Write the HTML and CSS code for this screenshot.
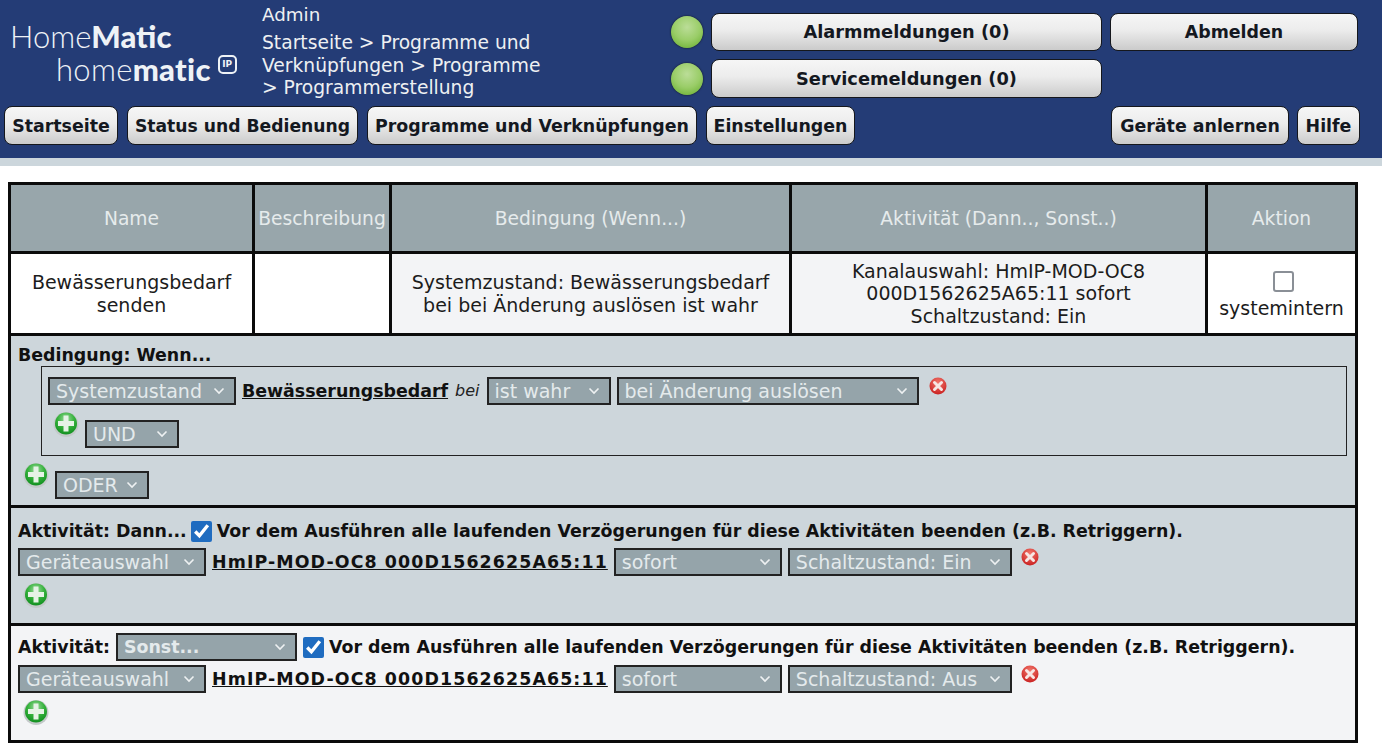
FILE: index.html
```html
<!DOCTYPE html>
<html lang="de">
<head>
<meta charset="utf-8">
<title>HomeMatic</title>
<link rel="stylesheet" href="styles.css">
</head>
<body>
<svg class="defs" width="0" height="0" aria-hidden="true">
  <defs>
    <radialGradient id="gg" cx="50%" cy="30%" r="75%"><stop offset="0" stop-color="#9fdc9f"/><stop offset="0.5" stop-color="#35b23c"/><stop offset="1" stop-color="#0c8a1c"/></radialGradient>
    <radialGradient id="rg" cx="50%" cy="30%" r="75%"><stop offset="0" stop-color="#f2776c"/><stop offset="1" stop-color="#c71c1c"/></radialGradient>
    <symbol id="plus" viewBox="0 0 26 26"><circle cx="13" cy="13.500" r="12.500" fill="#c3c9c9"/><circle cx="13" cy="12.500" r="11" fill="url(#gg)"/><path d="M10.500 4.500h5v5.500H21v5h-5.500v5.500h-5V15H5v-5h5.500z" fill="#e6f3e6"/></symbol>
    <symbol id="cross" viewBox="0 0 18 18"><circle cx="9" cy="9" r="8.500" fill="url(#rg)"/><path d="M5.500 5.500l7 7M12.500 5.500l-7 7" stroke="#f7e6e4" stroke-width="3" stroke-linecap="round"/></symbol>
  </defs>
</svg>
<header class="topbar">
  <div class="toprow">
    <div class="logo">
      <div class="logo-a">Home<b>Matic</b></div>
      <div class="logo-b">home<b>matic</b><span class="ip">IP</span></div>
    </div>
    <div class="crumbs">
      <div class="user">Admin</div>
      <div class="path">Startseite &gt; Programme und Verknüpfungen &gt; Programme &gt; Programmerstellung</div>
    </div>
    <div class="status">
      <span class="led"></span>
      <button class="btn wide">Alarmmeldungen (0)</button>
      <button class="btn">Abmelden</button>
      <span class="led"></span>
      <button class="btn wide">Servicemeldungen (0)</button>
    </div>
  </div>
  <nav class="navrow">
    <button class="btn b114">Startseite</button>
    <button class="btn b231">Status und Bedienung</button>
    <button class="btn b330">Programme und Verknüpfungen</button>
    <button class="btn b149">Einstellungen</button>
    <span class="spacer"></span>
    <button class="btn b178">Geräte anlernen</button>
    <button class="btn b63">Hilfe</button>
  </nav>
</header>
<div class="stripe"></div>
<main class="panel">
  <table class="overview">
    <colgroup><col class="c1"><col class="c2"><col class="c3"><col class="c4"><col class="c5"></colgroup>
    <thead>
      <tr><th>Name</th><th>Beschreibung</th><th>Bedingung (Wenn...)</th><th>Aktivität (Dann.., Sonst..)</th><th>Aktion</th></tr>
    </thead>
    <tbody>
      <tr>
        <td>Bewässerungsbedarf senden</td>
        <td></td>
        <td class="soft">Systemzustand: Bewässerungsbedarf bei bei Änderung auslösen ist wahr</td>
        <td class="soft">Kanalauswahl: HmIP-MOD-OC8 000D1562625A65:11 sofort Schaltzustand: Ein</td>
        <td><input class="sys" type="checkbox"><div>systemintern</div></td>
      </tr>
    </tbody>
  </table>
  <section class="sec sec-if">
    <div class="title">Bedingung: Wenn...</div>
    <div class="group">
      <div class="line">
        <select class="sel w188"><option>Systemzustand</option></select>
        <a class="link">Bewässerungsbedarf</a>
        <i class="bei">bei</i>
        <select class="sel w124"><option>ist wahr</option></select>
        <select class="sel w302"><option>bei Änderung auslösen</option></select>
        <svg class="x"><use href="#cross"/></svg>
      </div>
      <div class="line addline">
        <svg class="add"><use href="#plus"/></svg>
        <select class="sel w94"><option>UND</option></select>
      </div>
    </div>
    <div class="line addline outer">
      <svg class="add"><use href="#plus"/></svg>
      <select class="sel w94"><option>ODER</option></select>
    </div>
  </section>
  <section class="sec sec-then">
    <div class="line head">
      <b>Aktivität: Dann...</b>
      <input class="chk" type="checkbox" checked>
      <b>Vor dem Ausführen alle laufenden Verzögerungen für diese Aktivitäten beenden (z.B. Retriggern).</b>
    </div>
    <div class="line">
      <select class="sel w188"><option>Geräteauswahl</option></select>
      <a class="link dev">HmIP-MOD-OC8 000D1562625A65:11</a>
      <select class="sel w168"><option>sofort</option></select>
      <select class="sel w224"><option>Schaltzustand: Ein</option></select>
      <svg class="x"><use href="#cross"/></svg>
    </div>
    <svg class="add solo"><use href="#plus"/></svg>
  </section>
  <section class="sec sec-else">
    <div class="line head">
      <b>Aktivität:</b>
      <select class="sel w181 strong"><option>Sonst...</option></select>
      <input class="chk" type="checkbox" checked>
      <b>Vor dem Ausführen alle laufenden Verzögerungen für diese Aktivitäten beenden (z.B. Retriggern).</b>
    </div>
    <div class="line">
      <select class="sel w188"><option>Geräteauswahl</option></select>
      <a class="link dev">HmIP-MOD-OC8 000D1562625A65:11</a>
      <select class="sel w168"><option>sofort</option></select>
      <select class="sel w224"><option>Schaltzustand: Aus</option></select>
      <svg class="x"><use href="#cross"/></svg>
    </div>
    <svg class="add solo"><use href="#plus"/></svg>
  </section>
</main>
</body>
</html>
```
FILE: styles.css
```css
* { box-sizing: border-box; }
html, body { margin: 0; padding: 0; }
body { width: 1382px; height: 756px; overflow: hidden; background: #fff; color: #111; font: 19px/22px "DejaVu Sans", Verdana, sans-serif; }
.defs { display: block; height: 0; }

.topbar { height: 158px; background: #243c76; color: #eef0f2; }
.toprow { display: flex; height: 106px; }
.logo { width: 262px; padding: 20px 0 0 10px; font-family: Lato, sans-serif; color: #eef2f6; font-weight: 300; font-size: 31px; line-height: 33px; }
.logo b { font-weight: 900; }
.logo-b { padding-left: 46px; display: flex; align-items: flex-start; letter-spacing: .3px; }
.ip { display: block; margin: 2px 0 0 7px; width: 19px; height: 19px; border: 2px solid #eef2f6; border-radius: 5px; font: 700 9px/15px "DejaVu Sans", sans-serif; text-align: center; letter-spacing: 0; }
.crumbs { width: 380px; padding-top: 3px; font-size: 18.700px; }
.user { line-height: 23px; margin-bottom: 6px; font-size: 18.300px; }
.path { width: 282px; line-height: 22.500px; }
.status { display: grid; grid-template-columns: 32px 391px 248px; column-gap: 8px; row-gap: 8px; grid-template-rows: 38px 39px; padding-top: 13px; margin-left: 29px; align-items: center; }
.status .btn { height: 100%; }
.led { width: 32px; height: 32px; border-radius: 50%; background: radial-gradient(circle at 50% 35%, #bbdd98 0, #9acd68 50%, #62ab28 100%); box-shadow: 0 0 2px #111; }

.navrow { display: flex; gap: 9px; height: 39px; padding: 0 22px 0 4px; }
.spacer { flex: 1; }
.navrow .b63 { margin-left: -1px; }
.btn { padding: 0; height: 39px; border: 1.500px solid #15171c; border-radius: 8px; background: linear-gradient(#f6f6f6 0, #ececec 45%, #cbcbcb 100%); color: #14181f; font: 700 17.400px/22px "DejaVu Sans", sans-serif; white-space: nowrap; }
.wide { font-size: 17.800px; }
.b114 { width: 114px; } .b231 { width: 231px; font-size: 17.200px; } .b330 { width: 330px; } .b149 { width: 149px; } .b178 { width: 178px; } .b63 { width: 63px; }

.stripe { height: 8px; background: #ccd6dc; }

.panel { margin: 16px 0 0 8px; width: 1350px; border: 3px solid #0b0b0b; border-top: 0; }
.overview { width: 1350px; margin-left: -3px; border-collapse: collapse; table-layout: fixed; text-align: center; }
.overview th, .overview td { border: 3px solid #0b0b0b; padding: 0; }
.overview th { height: 69px; padding-top: 1px; background: #98a6ab; color: #e6ebec; font-weight: 400; font-size: 18.700px; white-space: nowrap; overflow: hidden; }
.overview td { height: 82px; background: #fff; line-height: 22.500px; padding: 0 8px; color: #1c1c1c; }
.overview td.soft { background: #f3f4f6; }
.c1 { width: 244px; } .c2 { width: 137px; } .c3 { width: 400px; } .c4 { width: 416px; } .c5 { width: 150px; }
.sys { display: block; width: 21px; height: 21px; margin: 3px 0 5px calc(50% - 9px); appearance: none; border: 2.500px solid #8a8f96; border-radius: 3px; background: #fff; }

.sec { border-top: 3px solid #0b0b0b; padding: 0 7px; }
.overview + .sec { border-top: 0; }
.sec-if { height: 169px; background: #cdd6db; padding-top: 8px; }
.sec-then { height: 118px; background: #cdd6db; padding-top: 8px; }
.sec-else { height: 117px; background: #f3f4f6; padding-top: 6px; }
.title { font-weight: 700; font-size: 17.400px; line-height: 22px; }
.group { margin: 0 0 0 23px; width: 1306px; height: 90px; border: 1.500px solid #222; padding-top: 10px; }
.group .line { margin-left: 6px; }
.line { display: flex; align-items: flex-start; gap: 6px; }
.line b, .line .link { font-size: 17.400px; line-height: 28px; }
.head { align-items: center; margin-bottom: 2px; height: 30px; }
.sec-then .chk { margin-left: -2px; }
.sec-else .head { margin-bottom: 3px; }
.sel { appearance: none; height: 28px; padding: 0 20px 0 6px; border: 2px solid #222; border-radius: 0; background: #95a4aa url("data:image/svg+xml,%3Csvg xmlns='http://www.w3.org/2000/svg' width='12' height='8'%3E%3Cpath d='M1.500 1.500 6 6l4.500-4.500' fill='none' stroke='%23eef1f2' stroke-width='1.600'/%3E%3C/svg%3E") no-repeat right 9px center; color: #e4eaec; font: 19px "DejaVu Sans", sans-serif; }
.strong { font-weight: 700; font-size: 17.400px; }
.w94 { width: 94px; } .w124 { width: 124px; } .w168 { width: 168px; } .w181 { width: 181px; } .w188 { width: 188px; } .w224 { width: 224px; } .w302 { width: 302px; }
.link { color: #111; font-weight: 700; text-decoration: underline; }
.line .dev { letter-spacing: 1.100px; }
.bei { line-height: 28px; font-size: 16px; color: #222; margin: 0 1px; }
.x { width: 18px; height: 18px; margin-left: 3px; }
.group .x { margin: 0 0 0 4px; }
.add { width: 26px; height: 26px; display: block; }
.addline .add { margin-top: -9px; }
.outer { margin-top: 15px; }
.outer .add { margin-left: 5px; }
.group .addline { margin: 15px 0 0 11px; }
.sec-then .add, .sec-else .add { margin: 6px 0 0 5px; }
.chk { width: 21px; height: 21px; margin: 0 -1px 0 0; accent-color: #1f6cc0; flex: none; }
```
